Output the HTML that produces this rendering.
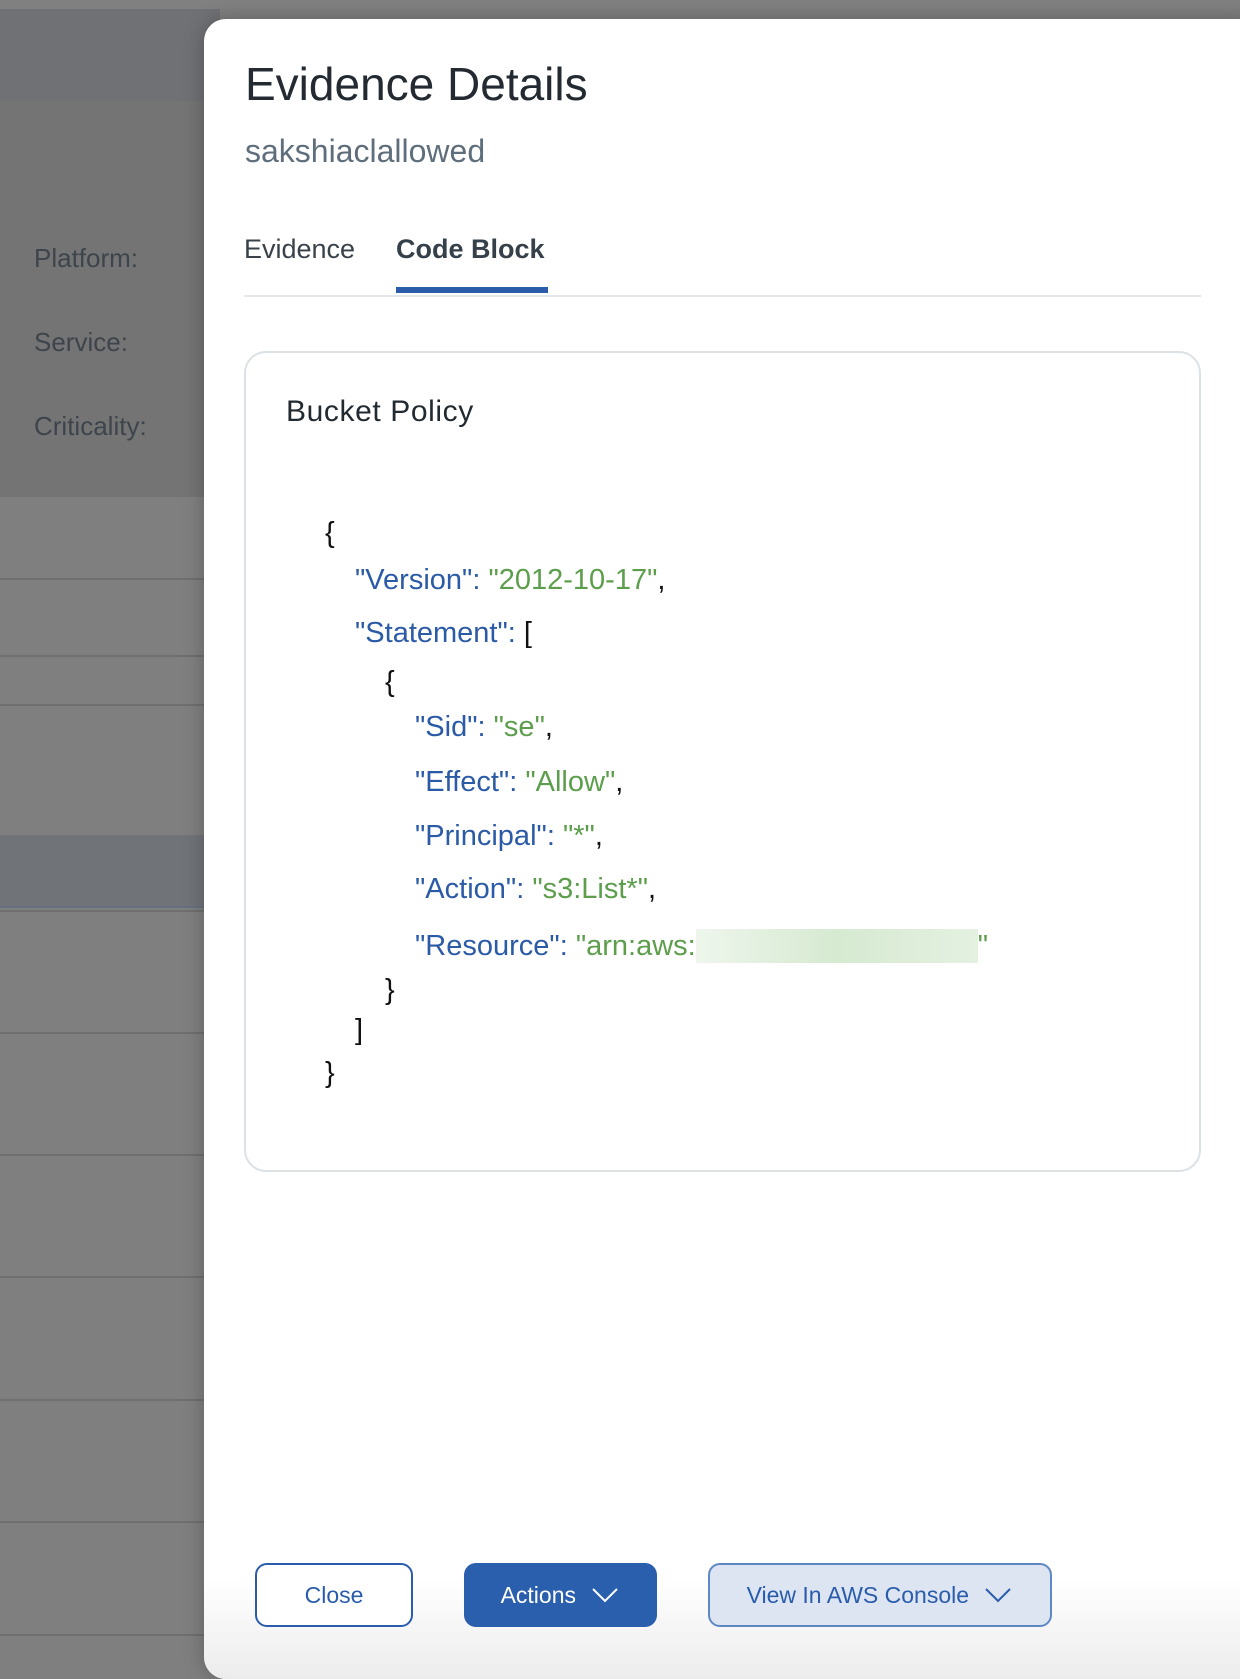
<!DOCTYPE html>
<html><head><meta charset="utf-8"><style>
*{margin:0;padding:0;box-sizing:border-box}
body{width:1240px;height:1667px;position:relative;overflow:hidden;background:#7f7f7f;font-family:"Liberation Sans",sans-serif}
.a{position:absolute;white-space:nowrap}
.ln{position:absolute;left:0;width:210px;height:2px;background:#6f6f6f}
.lbl{position:absolute;left:34px;font-size:26px;line-height:26px;color:#3d444b}
#panel{position:absolute;left:204px;top:19px;width:1060px;height:1660px;background:#fff;border-radius:22px;box-shadow:0 0 20px rgba(0,0,0,.25);overflow:hidden}
#panel:after{content:"";position:absolute;left:0;right:0;top:1560px;height:100px;background:linear-gradient(#fff,#ececec)}
.code{position:absolute;font-size:29px;line-height:28px;white-space:nowrap;color:#111}
.k{color:#2b5aa6}.s{color:#5c9e4c}
.btn{position:absolute;top:1563px;height:64px;border-radius:12px;display:flex;align-items:center;justify-content:center;font-size:23px;z-index:2}
</style></head><body>
<div class="a" style="left:0;top:0;width:1240px;height:9px;background:#808080"></div>
<div class="a" style="left:0;top:9px;width:220px;height:92px;background:#6f7175"></div>
<div class="a" style="left:0;top:101px;width:220px;height:396px;background:#747474"></div>
<div class="a" style="left:0;top:835px;width:220px;height:72px;background:#707378"></div>
<div class="ln" style="top:578px"></div>
<div class="ln" style="top:655px"></div>
<div class="ln" style="top:704px"></div>
<div class="ln" style="top:906px;background:#66707c"></div>
<div class="ln" style="top:910px"></div>
<div class="ln" style="top:1032px"></div>
<div class="ln" style="top:1154px"></div>
<div class="ln" style="top:1276px"></div>
<div class="ln" style="top:1399px"></div>
<div class="ln" style="top:1521px"></div>
<div class="ln" style="top:1634px"></div>
<div class="lbl" style="top:245px">Platform:</div>
<div class="lbl" style="top:329px">Service:</div>
<div class="lbl" style="top:413px">Criticality:</div>

<div id="panel"></div>
<div class="a" style="left:245px;top:61px;font-size:46px;line-height:46px;color:#232a31">Evidence Details</div>
<div class="a" style="left:245px;top:135px;font-size:32px;line-height:32px;color:#5e6e7c">sakshiaclallowed</div>
<div class="a" style="left:244px;top:236px;font-size:27px;line-height:27px;color:#39424b">Evidence</div>
<div class="a" style="left:396px;top:236px;font-size:27px;line-height:27px;color:#35404a;font-weight:bold">Code Block</div>
<div class="a" style="left:396px;top:287px;width:152px;height:6px;background:#2a5cab"></div>
<div class="a" style="left:244px;top:295px;width:957px;height:2px;background:#e3e8ed"></div>

<div class="a" style="left:244px;top:351px;width:957px;height:821px;border:2px solid #dce1e6;border-radius:22px"></div>
<div class="a" style="left:286px;top:397px;font-size:30px;line-height:30px;letter-spacing:0.6px;color:#222a31">Bucket Policy</div>

<div class="code" style="left:325px;top:519px">{</div>
<div class="code" style="left:355px;top:566px"><span class="k">"Version"</span><span class="k">:</span> <span class="s">"2012-10-17"</span>,</div>
<div class="code" style="left:355px;top:619px"><span class="k">"Statement"</span><span class="k">:</span> [</div>
<div class="code" style="left:385px;top:668px">{</div>
<div class="code" style="left:415px;top:713px"><span class="k">"Sid"</span><span class="k">:</span> <span class="s">"se"</span>,</div>
<div class="code" style="left:415px;top:768px"><span class="k">"Effect"</span><span class="k">:</span> <span class="s">"Allow"</span>,</div>
<div class="code" style="left:415px;top:822px"><span class="k">"Principal"</span><span class="k">:</span> <span class="s">"*"</span>,</div>
<div class="code" style="left:415px;top:875px"><span class="k">"Action"</span><span class="k">:</span> <span class="s">"s3:List*"</span>,</div>
<div class="code" style="left:415px;top:929px"><span class="k">"Resource"</span><span class="k">:</span> <span class="s">"arn:aws:<span style="display:inline-block;width:282px;height:34px;vertical-align:-8px;background:linear-gradient(90deg,#eef6ec,#d6e9d1 50%,#e4f1e1)"></span>"</span></div>
<div class="code" style="left:385px;top:976px">}</div>
<div class="code" style="left:355px;top:1016px">]</div>
<div class="code" style="left:325px;top:1059px">}</div>

<div class="btn" style="left:255px;width:158px;border:2px solid #2a5cab;color:#2a5cab;background:#fff">Close</div>
<div class="btn" style="left:464px;width:193px;background:#2a5fad;color:#fff">Actions&nbsp;<svg width="30" height="18" viewBox="0 0 30 18" style="margin-left:8px"><path d="M3 3 L15 15 L27 3" fill="none" stroke="#fff" stroke-width="2"/></svg></div>
<div class="btn" style="left:708px;width:344px;border:2px solid #5e88c4;background:#dce5f1;color:#2a5cab">View In AWS Console&nbsp;<svg width="30" height="18" viewBox="0 0 30 18" style="margin-left:8px"><path d="M3 3 L15 15 L27 3" fill="none" stroke="#2a5cab" stroke-width="2"/></svg></div>
</body></html>
